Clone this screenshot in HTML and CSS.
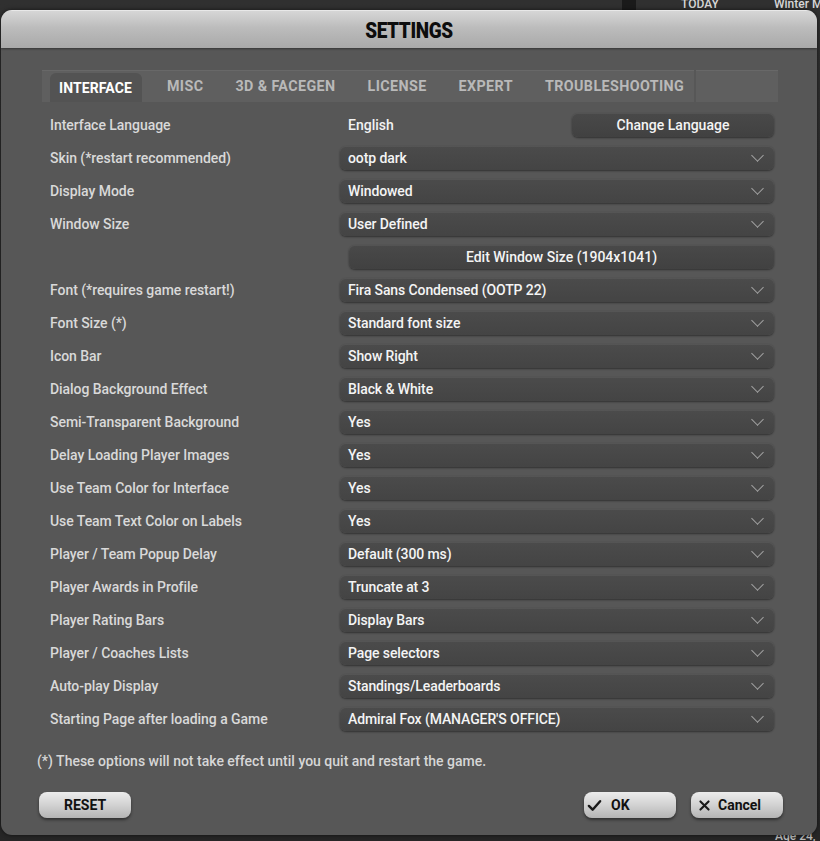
FILE: index.html
```html
<!DOCTYPE html>
<html>
<head>
<meta charset="utf-8">
<link rel="stylesheet" href="styles.css">
</head>
<body>
<div class="backdrop">
  <span class="bg-text bg-today">TODAY</span>
  <span class="bg-text bg-winter">Winter M</span>
  <span class="bg-text bg-age">Age 24,</span>
  <div class="bg-line"></div>
</div>
<div class="dialog">
  <div class="header"><h1>SETTINGS</h1></div>
  <div class="body">
    <div class="tabrow">
      <div class="tabs">
        <div class="tab active">INTERFACE</div>
        <div class="tab">MISC</div>
        <div class="tab">3D &amp; FACEGEN</div>
        <div class="tab">LICENSE</div>
        <div class="tab">EXPERT</div>
        <div class="tab">TROUBLESHOOTING</div>
      </div>
      <div class="tab-extra"></div>
    </div>
    <div class="rows">
      <div class="label">Interface Language</div>
      <div class="value split"><span class="plain">English</span><div class="btn dark lang">Change Language</div></div>

      <div class="label">Skin (*restart recommended)</div>
      <div class="value"><div class="select">ootp dark</div></div>

      <div class="label">Display Mode</div>
      <div class="value"><div class="select">Windowed</div></div>

      <div class="label">Window Size</div>
      <div class="value"><div class="select">User Defined</div></div>

      <div class="label"></div>
      <div class="value"><div class="btn dark wide">Edit Window Size (1904x1041)</div></div>

      <div class="label">Font (*requires game restart!)</div>
      <div class="value"><div class="select">Fira Sans Condensed (OOTP 22)</div></div>

      <div class="label">Font Size (*)</div>
      <div class="value"><div class="select">Standard font size</div></div>

      <div class="label">Icon Bar</div>
      <div class="value"><div class="select">Show Right</div></div>

      <div class="label">Dialog Background Effect</div>
      <div class="value"><div class="select">Black &amp; White</div></div>

      <div class="label">Semi-Transparent Background</div>
      <div class="value"><div class="select">Yes</div></div>

      <div class="label">Delay Loading Player Images</div>
      <div class="value"><div class="select">Yes</div></div>

      <div class="label">Use Team Color for Interface</div>
      <div class="value"><div class="select">Yes</div></div>

      <div class="label">Use Team Text Color on Labels</div>
      <div class="value"><div class="select">Yes</div></div>

      <div class="label">Player / Team Popup Delay</div>
      <div class="value"><div class="select">Default (300 ms)</div></div>

      <div class="label">Player Awards in Profile</div>
      <div class="value"><div class="select">Truncate at 3</div></div>

      <div class="label">Player Rating Bars</div>
      <div class="value"><div class="select">Display Bars</div></div>

      <div class="label">Player / Coaches Lists</div>
      <div class="value"><div class="select">Page selectors</div></div>

      <div class="label">Auto-play Display</div>
      <div class="value"><div class="select">Standings/Leaderboards</div></div>

      <div class="label">Starting Page after loading a Game</div>
      <div class="value"><div class="select">Admiral Fox (MANAGER'S OFFICE)</div></div>
    </div>
    <p class="note">(*) These options will not take effect until you quit and restart the game.</p>
    <div class="footer">
      <div class="btn light reset">RESET</div>
      <div class="right-btns">
        <div class="btn light ok"><svg viewBox="0 0 16 16" width="15" height="15"><path d="M2 8.5 L6 12.5 L14 3.5" fill="none" stroke="#1a1a1a" stroke-width="2.6" stroke-linecap="round" stroke-linejoin="round"/></svg><span>OK</span></div>
        <div class="btn light cancel"><svg viewBox="0 0 16 16" width="13" height="13"><path d="M3 3 L13 13 M13 3 L3 13" fill="none" stroke="#1a1a1a" stroke-width="2.6" stroke-linecap="round"/></svg><span>Cancel</span></div>
      </div>
    </div>
  </div>
</div>
</body>
</html>
```

FILE: styles.css
```css
* { box-sizing: border-box; }
html, body { margin: 0; padding: 0; }
body {
  width: 820px;
  height: 841px;
  overflow: hidden;
  background: #2a2a2a;
  font-family: Roboto, "Open Sans", "DejaVu Sans", sans-serif;
  position: relative;
}
.backdrop {
  position: absolute;
  inset: 0;
  background: linear-gradient(180deg, #303030 0%, #262626 100%);
}
.bg-text {
  position: absolute;
  color: #d8d8d8;
  font-size: 12px;
  font-weight: 500;
  white-space: nowrap;
}
.bg-today { left: 681px; top: -3px; }
.bg-winter { left: 774px; top: -3px; }
.bg-age { left: 775px; top: 829px; color: #bbb; }
.bg-line {
  position: absolute;
  left: 622px; top: 0;
  width: 14px; height: 11px;
  background: #1a1a1a;
}
.dialog {
  position: relative;
  margin: 10px 0 0 1px;
  width: 816px;
  height: 825px;
  background: #575757;
  border-radius: 11px;
  overflow: hidden;
  display: flex;
  flex-direction: column;
  box-shadow: 0 0 4px rgba(0,0,0,0.6);
}
.header {
  height: 38px;
  background: linear-gradient(180deg, #d6d6d6 0%, #bcbcbc 45%, #a9a9a9 100%);
  border-top: 1px solid #e8e8e8;
  display: flex;
  align-items: center;
  justify-content: center;
  box-shadow: 0 1px 2px rgba(0,0,0,0.4);
}
.header h1 {
  margin: 2px 0 0 0;
  font-size: 22px;
  font-weight: 900;
  color: #0d0d0d;
  letter-spacing: -0.4px;
  transform: scaleX(0.86);
}
.body {
  flex: 1;
  padding: 22px 39px 0 41px;
  display: flex;
  flex-direction: column;
}
.tabrow {
  display: flex;
  gap: 2px;
  height: 32px;
}
.tabs {
  flex: 1;
  min-width: 0;
  overflow: hidden;
  display: flex;
  align-items: stretch;
  background: #5f5f5f;
  border-top: 1px solid #686868;
  padding: 2px 0 0 8px;
}
.tab-extra {
  width: 82px;
  flex-shrink: 0;
  background: #5f5f5f;
  border-top: 1px solid #686868;
}
.tab {
  flex-shrink: 0;
  white-space: nowrap;
  display: flex;
  align-items: center;
  padding: 0 16px 3px 16px;
  color: #b9b9b9;
  font-size: 14.3px;
  font-weight: 700;
  letter-spacing: 0.4px;
}
.tab.active {
  color: #ffffff;
  background: #535353;
  border-radius: 6px 6px 0 0;
  padding: 0 10px 0 9px;
  margin-right: 9px;
  font-size: 14px;
  letter-spacing: 0.1px;
}
.rows {
  margin-top: 11px;
  padding: 0 4px 0 8px;
  display: grid;
  grid-template-columns: 290px 1fr;
  grid-auto-rows: 24px;
  row-gap: 9px;
}
.label {
  display: flex;
  align-items: center;
  color: #d9d9d9;
  font-size: 14px;
  font-weight: 500;
  letter-spacing: -0.05px;
  white-space: nowrap;
}
.value {
  display: flex;
  align-items: stretch;
}
.value.split {
  justify-content: space-between;
  align-items: center;
}
.plain {
  color: #f2f2f2;
  font-size: 14px;
  font-weight: 500;
  padding-left: 8px;
}
.select {
  flex: 1;
  position: relative;
  display: flex;
  align-items: center;
  padding-left: 8px;
  color: #f4f4f4;
  font-size: 14px;
  font-weight: 500;
  letter-spacing: -0.1px;
  white-space: nowrap;
  background: linear-gradient(180deg, #4b4b4b 0%, #444444 100%);
  border-radius: 6px;
  box-shadow: 0 1px 2px rgba(0,0,0,0.45), inset 0 1px 0 rgba(255,255,255,0.06);
}
.select::after {
  content: "";
  position: absolute;
  right: 12px;
  top: 5px;
  width: 8px;
  height: 8px;
  border-right: 1.6px solid #a4a4a4;
  border-bottom: 1.6px solid #a4a4a4;
  transform: rotate(45deg);
}
.btn {
  display: flex;
  align-items: center;
  justify-content: center;
  font-size: 14px;
  font-weight: 500;
  white-space: nowrap;
}
.btn.dark {
  background: linear-gradient(180deg, #494949 0%, #414141 100%);
  color: #f4f4f4;
  border-radius: 6px;
  box-shadow: 0 1px 2px rgba(0,0,0,0.45), inset 0 1px 0 rgba(255,255,255,0.06);
}
.btn.lang {
  width: 202px;
  height: 24px;
}
.btn.wide {
  flex: 1;
  margin-left: 9px;
}
.note {
  margin: 22px 0 0 -5px;
  color: #d6d6d6;
  font-size: 14px;
  font-weight: 500;
  line-height: 16px;
}
.footer {
  margin-top: 23px;
  display: flex;
  justify-content: space-between;
}
.btn.light {
  height: 26px;
  width: 92px;
  background: linear-gradient(180deg, #ececec 0%, #d2d2d2 50%, #b4b4b4 100%);
  border-radius: 8px;
  color: #111;
  font-weight: 700;
  box-shadow: 0 2px 3px rgba(0,0,0,0.45);
}
.reset { margin-left: -3px; }
.right-btns {
  display: flex;
  gap: 15px;
  margin-right: -5px;
}
.btn.ok {
  justify-content: flex-start;
  padding-left: 3px;
  gap: 9px;
  margin-left: 1px;
}
.btn.cancel {
  justify-content: flex-start;
  padding-left: 7px;
  gap: 7px;
}
.btn svg { display: block; }
```
